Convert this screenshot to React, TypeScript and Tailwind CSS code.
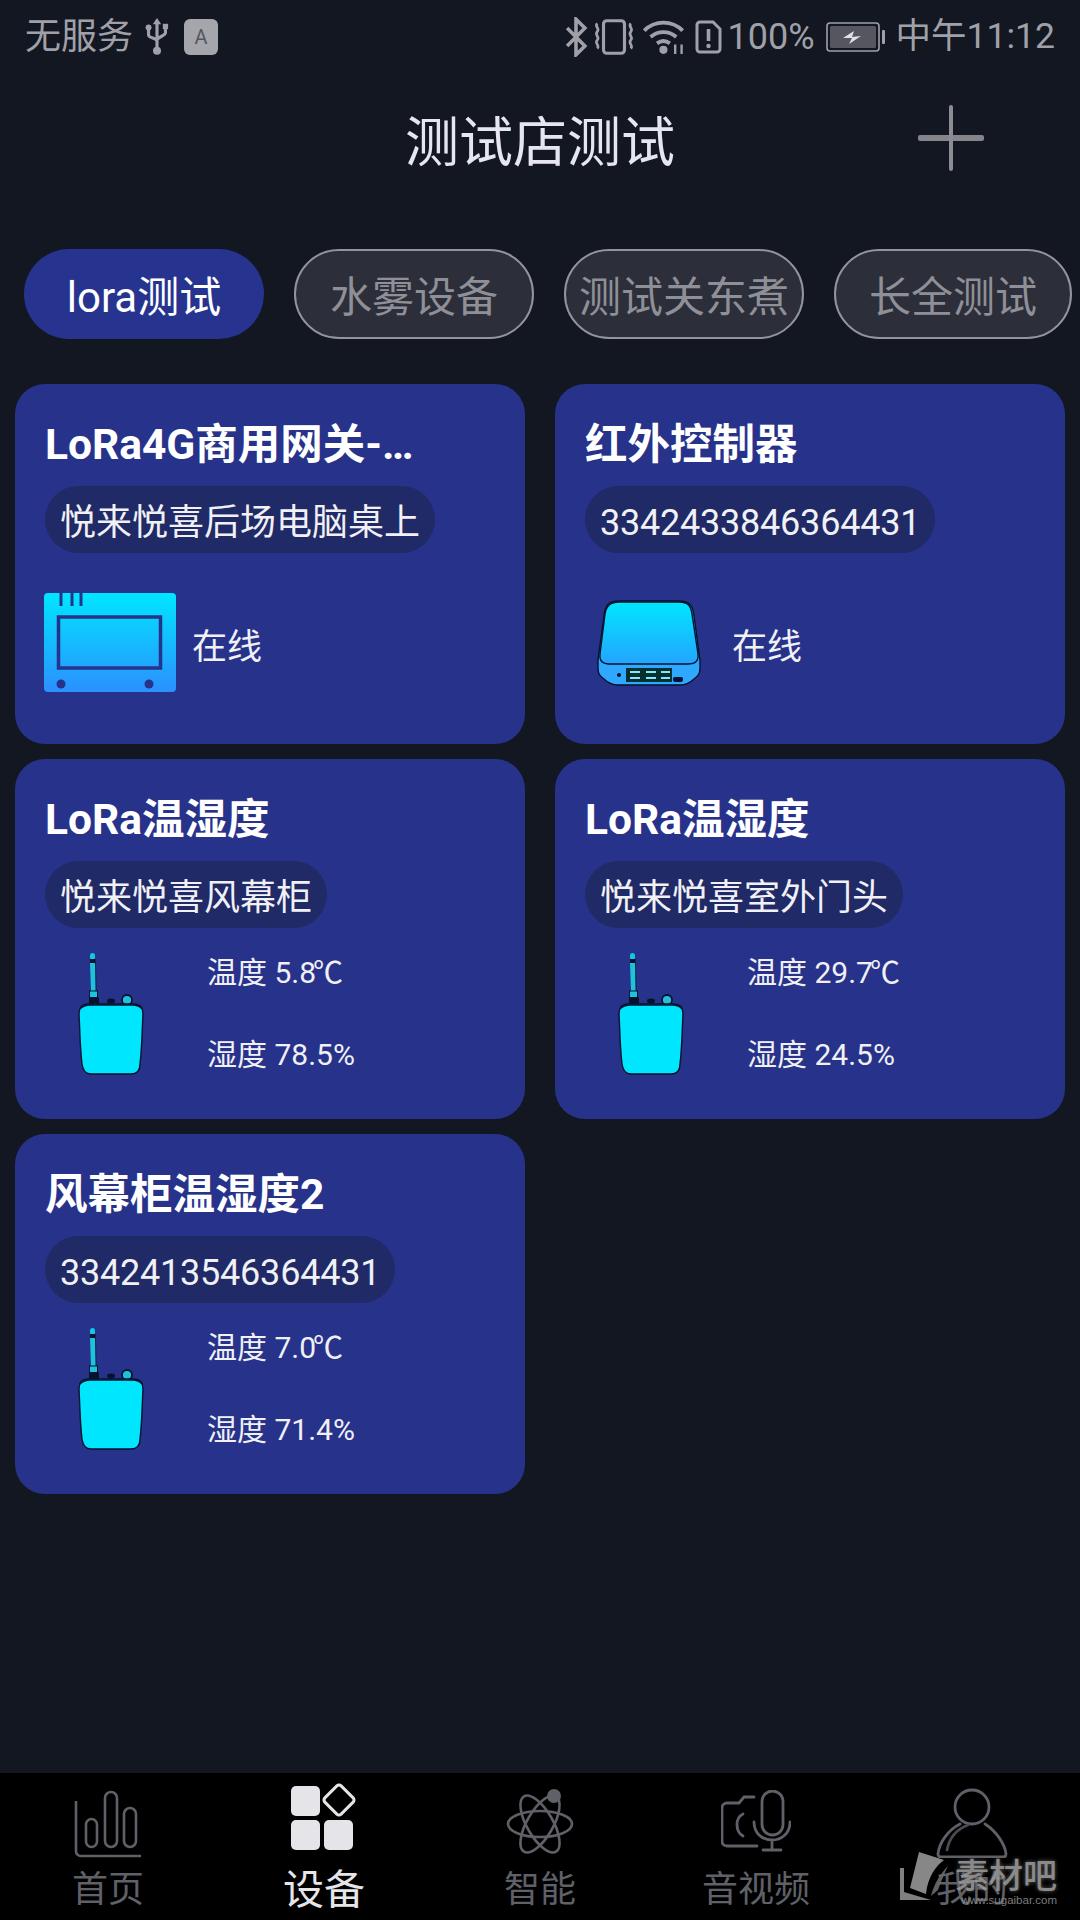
import React from "react";

const FONT = "font-['Roboto','Noto_Sans_CJK_SC','Noto_Sans',sans-serif]";

function Usb() {
  return (
    <svg width="24" height="38" viewBox="0 0 22 36" fill="none" stroke="#a0a1a8" strokeWidth="3">
      <path d="M11 3v27M3 10v6c0 3 8 3 8 6M19 9v5c0 3-8 4-8 7" />
      <path d="M11 0l4 6H7z" fill="#a0a1a8" stroke="none" />
      <circle cx="3" cy="9" r="2.8" fill="#a0a1a8" stroke="none" />
      <rect x="16.5" y="5.5" width="5" height="5" fill="#a0a1a8" stroke="none" />
      <circle cx="11" cy="31" r="3.8" fill="#a0a1a8" stroke="none" />
    </svg>
  );
}

function Bluetooth() {
  return (
    <svg width="24" height="40" viewBox="0 0 20 36" fill="none" stroke="#a0a1a8" strokeWidth="3.2">
      <path d="M2 10l16 16-8 8V2l8 8L2 26" />
    </svg>
  );
}

function Vibrate() {
  return (
    <svg width="44" height="36" viewBox="0 0 42 34" fill="none" stroke="#a0a1a8" strokeWidth="3">
      <rect x="11" y="1.5" width="20" height="31" rx="3" />
      <path d="M5 4c-3 3 3 5 0 8s3 5 0 8 3 5 0 8M37 4c-3 3 3 5 0 8s3 5 0 8 3 5 0 8" strokeWidth="2.6" />
    </svg>
  );
}

function Wifi() {
  return (
    <svg width="47" height="38" viewBox="0 0 44 34" fill="none" stroke="#a0a1a8" strokeWidth="3.6">
      <path d="M3 11c10-10 26-10 36 0M9 17c7-6 17-6 24 0M15 23c4-3 8-3 12 0" />
      <circle cx="21" cy="29" r="3.8" fill="#a0a1a8" stroke="none" />
      <path d="M32 24v9M38 24v9" strokeWidth="2.2" />
    </svg>
  );
}

function Sim() {
  return (
    <svg width="27" height="36" viewBox="0 0 27 34" fill="none" stroke="#a0a1a8" strokeWidth="3">
      <path d="M2 5a3 3 0 0 1 3-3h13l7 7v20a3 3 0 0 1-3 3H5a3 3 0 0 1-3-3z" />
      <path d="M13.5 9v12" strokeWidth="3.6" />
      <circle cx="13.5" cy="26" r="2.2" fill="#a0a1a8" stroke="none" />
    </svg>
  );
}

function Battery() {
  return (
    <svg width="62" height="30" viewBox="0 0 60 30" fill="none">
      <rect x="1" y="1" width="52" height="28" rx="3" stroke="#a0a1a8" strokeWidth="1.6" />
      <rect x="4" y="4" width="46" height="22" rx="1.5" fill="#55565f" />
      <rect x="56" y="8" width="3" height="14" rx="1" fill="#a0a1a8" />
      <path d="M17 16l11-7-2 6 9-1-12 8 3-6z" fill="#e2e2e6" />
    </svg>
  );
}

function Plus() {
  return (
    <svg width="66" height="66" viewBox="0 0 66 66">
      <rect x="0" y="30" width="66" height="6" rx="2" fill="#84848a" />
      <rect x="31" y="0" width="4" height="66" rx="2" fill="#8c8c92" />
    </svg>
  );
}

function Gateway() {
  return (
    <svg width="132" height="100" viewBox="0 0 132 100">
      <defs>
        <linearGradient id="gw" x1="0" y1="0" x2="0" y2="1">
          <stop offset="0" stopColor="#00e6ff" />
          <stop offset="1" stopColor="#2b90ff" />
        </linearGradient>
      </defs>
      <rect x="0" y="0" width="132" height="99" rx="4" fill="url(#gw)" />
      <path d="M17 0v13M28 0v13M37 0v13" stroke="#27338a" strokeWidth="3" />
      <rect x="14.5" y="24" width="102" height="51" fill="none" stroke="#27338a" strokeWidth="3.5" />
      <circle cx="17" cy="91" r="4.5" fill="#27338a" />
      <circle cx="105" cy="91" r="4.5" fill="#27338a" />
    </svg>
  );
}

function IrBox() {
  return (
    <svg width="104" height="86" viewBox="0 0 104 86">
      <defs>
        <linearGradient id="ir" x1="0" y1="0" x2="0" y2="1">
          <stop offset="0" stopColor="#00e6ff" />
          <stop offset="1" stopColor="#24a4ff" />
        </linearGradient>
      </defs>
      <path d="M1 60v8c0 6 2 8 6 11 4 4 8 6 14 6h62c6 0 10-2 14-6 4-3 6-5 6-11v-8L97 16C96 6 93 1 82 1H22C11 1 8 6 7 16z" fill="#2fa8ff" stroke="#06122e" strokeWidth="1.4" />
      <path d="M3 54L8 14C9 6 13 2 22 2h60c9 0 12 4 13 12l6 40c1 9-5 10-10 10H14C8 64 2 63 3 54z" fill="url(#ir)" stroke="#06122e" strokeWidth="1.4" />
      <circle cx="22" cy="75" r="2" fill="#06122e" />
      <rect x="29" y="68" width="46" height="14" fill="#06302f" />
      <path d="M33 72h10M33 78h10M49 72h10M49 78h10M64 72h9M64 78h9" stroke="#7fe6ff" strokeWidth="2" />
      <rect x="76" y="77" width="10" height="5" rx="2" fill="#06122e" />
    </svg>
  );
}

function Sensor() {
  return (
    <svg width="66" height="124" viewBox="0 0 66 124">
      <rect x="12" y="1" width="5" height="7" rx="2.5" fill="#12c8e4" />
      <rect x="12" y="7" width="5.5" height="4" fill="#06122e" />
      <path d="M12 11h5.5L18 39h-5z" fill="#1ec2dc" />
      <path d="M17.5 11l.5 28" stroke="#06122e" strokeWidth="0.8" />
      <rect x="11.5" y="39" width="8" height="7" fill="#1ec2dc" stroke="#06122e" />
      <rect x="11" y="45" width="10" height="7" rx="1.5" fill="#06122e" />
      <ellipse cx="33" cy="49" rx="4" ry="2.4" fill="#06122e" />
      <circle cx="49" cy="48" r="5" fill="#1ec2dc" stroke="#06122e" strokeWidth="1.8" />
      <path d="M1 62c0-7 3-10 9-10h46c6 0 9 3 9 10-1 18-1 34-3 50 0 7-4 10-9 10H13c-5 0-8-3-9-10-2-16-2-32-3-50z" fill="#00e6ff" stroke="#06122e" strokeWidth="1.4" />
      <path d="M2 57c3-3 6-4 10-4h42c4 0 8 1 10 4" fill="none" stroke="#06122e" strokeWidth="1.6" />
    </svg>
  );
}

const STROKE = "#5f6068";

function NavHome() {
  return (
    <svg width="68" height="68" viewBox="0 0 68 68" fill="none" stroke={STROKE} strokeWidth="2.6">
      <path d="M2 11v50c0 3 2 5 5 5h60" />
      <rect x="12" y="29" width="11" height="28" rx="5.5" />
      <rect x="31" y="2" width="12" height="55" rx="6" />
      <rect x="50" y="18" width="12" height="39" rx="6" />
    </svg>
  );
}

function NavDevice() {
  return (
    <svg width="68" height="68" viewBox="0 0 68 68" fill="#e4e4e9">
      <rect x="1" y="4" width="29" height="30" rx="5" />
      <rect x="1" y="38" width="29" height="30" rx="5" />
      <rect x="34" y="38" width="29" height="30" rx="5" />
      <rect x="37.5" y="6.5" width="23" height="23" rx="3" fill="none" stroke="#e4e4e9" strokeWidth="3" transform="rotate(45 49 18)" />
    </svg>
  );
}

function NavSmart() {
  return (
    <svg width="68" height="68" viewBox="0 0 68 68" fill="none" stroke={STROKE} strokeWidth="2.6">
      <ellipse cx="34" cy="36" rx="32" ry="13" />
      <ellipse cx="34" cy="36" rx="32" ry="13" transform="rotate(60 34 36)" />
      <ellipse cx="34" cy="36" rx="32" ry="13" transform="rotate(120 34 36)" />
      <circle cx="48" cy="8" r="7" fill={STROKE} stroke="none" />
    </svg>
  );
}

function NavMedia() {
  return (
    <svg width="70" height="62" viewBox="0 0 70 62" fill="none" stroke={STROKE} strokeWidth="2.8" strokeLinecap="round">
      <path d="M33 7H23l-5 6H6c-3 0-5 2-5 5v33c0 3 2 5 5 5h30" />
      <path d="M22 24c-8 4-8 17 0 22" />
      <rect x="41" y="1" width="21" height="44" rx="10.5" />
      <path d="M33 32c0 24 36 24 36 0M51 50v10M42 60h18" />
    </svg>
  );
}

function NavMe() {
  return (
    <svg width="72" height="70" viewBox="0 0 72 70" fill="none" stroke={STROKE} strokeWidth="2.8" strokeLinecap="round">
      <circle cx="36" cy="19" r="17" />
      <path d="M49 36c11 7 20 20 21 30 0 2-1 3-3 3H5c-2 0-3-1-3-3 1-11 10-24 22-30" />
      <path d="M11 62c2-11 8-20 21-25" stroke="#4a4b52" />
    </svg>
  );
}

function Status() {
  return (
    <div className="h-[74px] flex items-center justify-between pl-[25px] pr-[25px] text-[36px] text-[#a0a1a8]">
      <div className="flex items-center">
        <span>无服务</span>
        <span className="ml-[12px] flex"><Usb /></span>
        <span className="ml-[15px] w-[34px] h-[36px] rounded-[6px] bg-[#a5a6ab] text-[#55565c] text-[20px] leading-[36px] text-center">A</span>
      </div>
      <div className="flex items-center">
        <Bluetooth />
        <span className="ml-[4px] flex"><Vibrate /></span>
        <span className="ml-[5px] flex"><Wifi /></span>
        <span className="ml-[7px] flex"><Sim /></span>
        <span className="ml-[6px]">100%</span>
        <span className="ml-[10px] flex"><Battery /></span>
        <span className="ml-[9px] text-[35.5px]">中午11:12</span>
      </div>
    </div>
  );
}

function Tab({ label, active, last }: { label: string; active?: boolean; last?: boolean }) {
  return (
    <div
      className={
        active
          ? "w-[240px] h-[90px] pt-[6px] shrink-0 rounded-[45px] bg-[#27348f] text-white flex items-center justify-center text-[42px]"
          : last
            ? "w-[238px] h-[90px] pt-[6px] shrink-0 rounded-[45px] bg-[#2c2e39] border-2 border-[#94959c] text-[#8f9097] flex items-center justify-center text-[42px]"
            : "w-[240px] h-[90px] pt-[6px] shrink-0 rounded-[45px] bg-[#2c2e39] border-2 border-[#94959c] text-[#8f9097] flex items-center justify-center text-[42px]"
      }
    >
      {label}
    </div>
  );
}

function Card({ title, chip, digits, children }: { title: string; chip: string; digits?: boolean; children: React.ReactNode }) {
  return (
    <div className="h-[360px] rounded-[30px] bg-[#27338a] pl-[30px] pt-[37px]">
      <div className="text-[42.5px] leading-[48px] font-bold text-white whitespace-nowrap">{title}</div>
      <div
        className={
          digits
            ? "mt-[17px] h-[67px] w-fit rounded-full bg-[#1f2a66] px-[15px] pt-[6px] flex items-center text-[36px] tracking-[-0.22px] text-[#f0f0f5]"
            : "mt-[17px] h-[67px] w-fit rounded-full bg-[#1f2a66] px-[15px] pt-[6px] flex items-center text-[36px] text-[#f0f0f5]"
        }
      >
        {chip}
      </div>
      {children}
    </div>
  );
}

function Online({ icon, iconClass }: { icon: React.ReactNode; iconClass: string }) {
  return (
    <div className="mt-[40px] h-[100px] flex items-center">
      <div className={iconClass}>{icon}</div>
      <span className="pt-[10px] text-[35px] text-[#f0f0f5]">在线</span>
    </div>
  );
}

function Readings({ temp, hum }: { temp: string; hum: string }) {
  return (
    <div className="mt-[24px] flex">
      <div className="ml-[33px] w-[129px] shrink-0 flex"><Sensor /></div>
      <div className="flex flex-col text-[30px] leading-[40px] text-[#f0f0f5] gap-[42px] mt-[1px]">
        <span>温度 {temp}<span className="inline-block -ml-[3px]">℃</span></span>
        <span>湿度 {hum}</span>
      </div>
    </div>
  );
}

function NavItem({ icon, label, active, iconClass }: { icon: React.ReactNode; label: string; active?: boolean; iconClass: string }) {
  return (
    <div className="flex flex-col items-center pt-[10px]">
      <div className="h-[74px] flex items-start justify-center">
        <div className={iconClass}>{icon}</div>
      </div>
      <span className={active ? "mt-[7px] text-[41px] leading-[52px] text-[#e6e6ea]" : "mt-[7px] text-[36px] leading-[52px] text-[#5f6068]"}>
        {label}
      </span>
    </div>
  );
}

export default function App() {
  return (
    <div className={`w-[1080px] h-[1920px] bg-[#131722] flex flex-col relative overflow-hidden ${FONT}`}>
      <Status />
      <div className="h-[132px] pt-[7px] flex items-center justify-center relative">
        <span className="text-[54px] text-[#e6e6f0]">测试店测试</span>
        <div className="absolute right-[96px] top-[31px] flex"><Plus /></div>
      </div>
      <div className="mt-[43px] flex gap-[30px] pl-[24px] overflow-hidden">
        <Tab label="lora测试" active />
        <Tab label="水雾设备" />
        <Tab label="测试关东煮" />
        <Tab label="长全测试" last />
      </div>
      <div className="mt-[45px] px-[15px] grid grid-cols-2 gap-x-[30px] gap-y-[15px]">
        <Card title="LoRa4G商用网关-…" chip="悦来悦喜后场电脑桌上">
          <Online icon={<Gateway />} iconClass="flex -ml-[1px] mr-[16px]" />
        </Card>
        <Card title="红外控制器" chip="3342433846364431" digits>
          <Online icon={<IrBox />} iconClass="flex ml-[12px] mr-[31px]" />
        </Card>
        <Card title="LoRa温湿度" chip="悦来悦喜风幕柜">
          <Readings temp="5.8" hum="78.5%" />
        </Card>
        <Card title="LoRa温湿度" chip="悦来悦喜室外门头">
          <Readings temp="29.7" hum="24.5%" />
        </Card>
        <Card title="风幕柜温湿度2" chip="3342413546364431" digits>
          <Readings temp="7.0" hum="71.4%" />
        </Card>
      </div>
      <div className="mt-auto h-[147px] bg-black grid grid-cols-5">
        <NavItem icon={<NavHome />} label="首页" iconClass="flex mt-[7px]" />
        <NavItem icon={<NavDevice />} label="设备" active iconClass="flex -mt-[1px]" />
        <NavItem icon={<NavSmart />} label="智能" iconClass="flex mt-[5px]" />
        <NavItem icon={<NavMedia />} label="音视频" iconClass="flex mt-[7px]" />
        <NavItem icon={<NavMe />} label="我的" iconClass="flex mt-[5px]" />
      </div>
      <div className="absolute left-[898px] top-[1850px] flex items-start opacity-90">
        <svg width="58" height="52" viewBox="0 0 58 52">
          <path d="M21 2L46 10C38 16 30 26 28 44L12 38Z" fill="#969696" />
          <path d="M2 18V50H33L6 42V18Z" fill="#8e8e8e" />
          <path d="M50 16C42 24 36 34 33 46L40 40C43 32 46 24 50 16Z" fill="#6a6a6a" />
        </svg>
        <div className="ml-[1px] mt-[9px] flex flex-col items-end w-[100px]">
          <span className="text-[34px] leading-[34px] font-medium text-[#9a9a9a] whitespace-nowrap [text-shadow:0_0_4px_#666666]">素材吧</span>
          <span className="text-[11.5px] leading-[14px] text-[#8a8a8a] font-['Liberation_Sans',sans-serif] whitespace-nowrap">www.sugaibar.com</span>
        </div>
      </div>
    </div>
  );
}
